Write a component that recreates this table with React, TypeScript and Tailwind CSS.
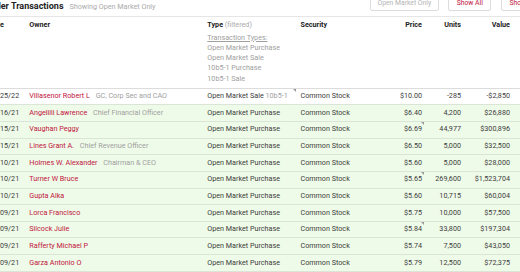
import React from "react";

type Row = {
  date: string;
  name: string;
  role?: string;
  type: string;
  plan?: string;
  price: string;
  units: string;
  value: string;
  typeNote?: boolean;
  priceNote?: boolean;
};

const rows: Row[] = [
  { date: "02/25/22", name: "Villasenor Robert L", role: "GC, Corp Sec and CAO", type: "Open Market Sale", plan: "10b5-1", price: "$10.00", units: "-285", value: "-$2,850", typeNote: true },
  { date: "12/16/21", name: "Angelilli Lawrence", role: "Chief Financial Officer", type: "Open Market Purchase", price: "$6.40", units: "4,200", value: "$26,880" },
  { date: "12/15/21", name: "Vaughan Peggy", type: "Open Market Purchase", price: "$6.69", units: "44,977", value: "$300,896", priceNote: true },
  { date: "12/15/21", name: "Lines Grant A.", role: "Chief Revenue Officer", type: "Open Market Purchase", price: "$6.50", units: "5,000", value: "$32,500" },
  { date: "12/10/21", name: "Holmes W. Alexander", role: "Chairman & CEO", type: "Open Market Purchase", price: "$5.60", units: "5,000", value: "$28,000" },
  { date: "12/10/21", name: "Turner W Bruce", type: "Open Market Purchase", price: "$5.65", units: "269,600", value: "$1,523,704", priceNote: true },
  { date: "12/10/21", name: "Gupta Alka", type: "Open Market Purchase", price: "$5.60", units: "10,715", value: "$60,004" },
  { date: "12/09/21", name: "Lorca Francisco", type: "Open Market Purchase", price: "$5.75", units: "10,000", value: "$57,500" },
  { date: "12/09/21", name: "Silcock Julie", type: "Open Market Purchase", price: "$5.84", units: "33,800", value: "$197,304", priceNote: true },
  { date: "12/09/21", name: "Rafferty Michael P", type: "Open Market Purchase", price: "$5.74", units: "7,500", value: "$43,050" },
  { date: "12/09/21", name: "Garza Antonio O", type: "Open Market Purchase", price: "$5.79", units: "12,500", value: "$72,375" },
];

function NoteMark() {
  return (
    <svg width="3" height="3" viewBox="0 0 3 3" className="block">
      <path d="M0 0 L3 0 L3 3 Z" fill="#9a9a9a" />
    </svg>
  );
}

export default function App() {
  return (
    <div className="w-[520px] h-[272px] overflow-hidden bg-white font-['Roboto',sans-serif] text-[7.2px] text-[#3c3c3c]">
      <div className="ml-[-11px] w-[580px]">
        {/* Title bar */}
        <div className="grid grid-cols-[381px_1fr] h-[17px] border-b border-[#e6e6e6]">
          <div className="flex items-baseline leading-[12px] ml-[-8px] whitespace-nowrap">
            <span className="text-[9px] font-bold text-[#222]">Insider Transactions</span>
            <span className="ml-[6px] text-[#aaa]">Showing Open Market Only</span>
          </div>
          <div className="flex gap-[9.5px] mt-[-4px] text-[6.8px] leading-none whitespace-nowrap">
            <div className="shrink-0 h-[15px] px-[6.5px] flex items-center border border-[#ddd] rounded-[2px] text-[#b4b4b4]">Open Market Only</div>
            <div className="shrink-0 h-[15px] px-[7.5px] flex items-center border border-[#ddd] rounded-[2px] text-[#c0143c]">Show All</div>
            <div className="shrink-0 h-[15px] px-[7.5px] flex items-center border border-[#ddd] rounded-[2px] text-[#c0143c]">Show Insider Only</div>
          </div>
        </div>

        {/* Column header */}
        <div className="flex pt-[3px] pb-[3.5px] leading-[10.3px] border-b-[1.5px] border-[#dcdcdc]">
          <div className="w-[40.3px] font-bold text-[#222]">Date</div>
          <div className="w-[178px] font-bold text-[#222]">Owner</div>
          <div className="w-[93.2px]">
            <div className="whitespace-nowrap">
              <span className="font-bold text-[#222]">Type</span> <span className="text-[#aaa]">(filtered)</span>
            </div>
            <div className="mt-[2.3px] text-[#a0a0a0] whitespace-nowrap">
              <div className="underline">Transaction Types:</div>
              <div>Open Market Purchase</div>
              <div>Open Market Sale</div>
              <div>10b5-1 Purchase</div>
              <div>10b5-1 Sale</div>
            </div>
          </div>
          <div className="w-[80px] font-bold text-[#222]">Security</div>
          <div className="w-[41.5px] text-right font-bold text-[#222]">Price</div>
          <div className="w-[39px] text-right font-bold text-[#222]">Units</div>
          <div className="w-[49px] text-right font-bold text-[#222]">Value</div>
        </div>

        {/* Rows */}
        {rows.map((r, i) => (
          <div
            key={i}
            className={`flex items-center h-[16.67px] border-b border-[#dbe5d7] ${i === 0 ? "bg-white" : "bg-[#effbe9]"}`}
          >
            <div className="w-[40.3px]">{r.date}</div>
            <div className="w-[178px] whitespace-nowrap">
              <span className="text-[#c0143c]">{r.name}</span>
              {r.role && <span className="ml-[4px] text-[#a0a0a0]"> {r.role}</span>}
            </div>
            <div className="relative w-[93.2px] h-full flex items-center whitespace-nowrap">
              <span>{r.type}</span>
              {r.plan && <span className="text-[#a0a0a0]">&nbsp;{r.plan}</span>}
              {r.typeNote && (
                <span className="absolute right-[4px] top-[0.5px]">
                  <NoteMark />
                </span>
              )}
            </div>
            <div className="w-[80px]">Common Stock</div>
            <div className="relative w-[41.5px] h-full flex items-center justify-end">
              <span>{r.price}</span>
              {r.priceNote && (
                <span className="absolute right-[-2px] top-[0.5px]">
                  <NoteMark />
                </span>
              )}
            </div>
            <div className="w-[39px] text-right">{r.units}</div>
            <div className="w-[49px] text-right">{r.value}</div>
          </div>
        ))}
      </div>
    </div>
  );
}
